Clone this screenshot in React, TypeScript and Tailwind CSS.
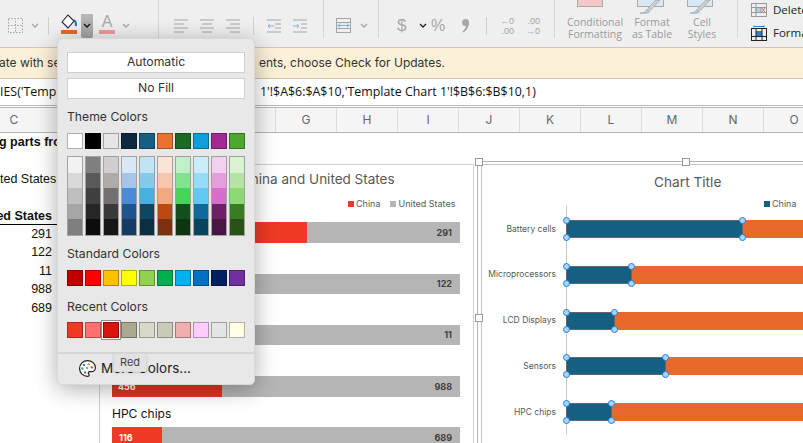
const themeTop = ["#ffffff", "#000000", "#e7e6e6", "#0e2841", "#156082", "#e97132", "#196b24", "#0f9ed5", "#a02b93", "#4ea72e"];
const themeShades = [
  ["#f2f2f2", "#d9d9d9", "#bfbfbf", "#a6a6a6", "#7f7f7f"],
  ["#7f7f7f", "#595959", "#404040", "#262626", "#0d0d0d"],
  ["#d0cece", "#aeabab", "#757070", "#3a3838", "#171616"],
  ["#d9e7f7", "#a5c6ea", "#4a8ad8", "#1f538d", "#153a63"],
  ["#c0e4f5", "#83cbeb", "#45b0e1", "#0f4761", "#0b2f40"],
  ["#fbe3d6", "#f6c6ad", "#f1a983", "#ba4a11", "#7b3010"],
  ["#c1f0c8", "#83e28e", "#47d459", "#124f1a", "#0d3512"],
  ["#caedfb", "#95dcf7", "#60caf3", "#0f6a9c", "#0a435e"],
  ["#f2cfee", "#e59edc", "#d86dcd", "#6f1f66", "#4a1544"],
  ["#d9f2d0", "#b4e5a2", "#8ed973", "#3a7c22", "#275317"],
];
const standard = ["#c00000", "#ff0000", "#ffc000", "#ffff00", "#92d050", "#00b050", "#00b0f0", "#0070c0", "#002060", "#7030a0"];
const recent = ["#ee3a24", "#ff7070", "#d9140f", "#aaa98f", "#d8d8cb", "#cbcab9", "#f0aeae", "#ffccff", "#e5e5e5", "#ffffe5"];

const leftBars = [
  { us: "291", top: 222, h: 21 },
  { us: "122", top: 274, h: 20 },
  { us: "11", top: 325, h: 20 },
  { us: "988", top: 376, h: 21 },
];
const rightBars = [
  { label: "Battery cells", w: 177 },
  { label: "Microprocessors", w: 66 },
  { label: "LCD Displays", w: 49 },
  { label: "Sensors", w: 100 },
  { label: "HPC chips", w: 46 },
];

function Swatch({ color, selected }: { color: string; selected?: boolean }) {
  return (
    <div
      className={`w-4 h-4 border border-black/30 ${selected ? "shadow-[0_0_0_1px_#ffffff,0_0_0_2px_#8f8f8f]" : ""}`}
      style={{ background: color }}
    />
  );
}

function Handle({ pos }: { pos: string }) {
  return <span className={`absolute w-[7px] h-[7px] rounded-full bg-[#a9d4fb] border border-[#1a80e0] ${pos}`} />;
}

function Chevron({ color = "#a5a5a5" }: { color?: string }) {
  return (
    <svg width="8" height="6" viewBox="0 0 8 6" fill="none" stroke={color} strokeWidth="1.3" className="shrink-0">
      <path d="M1 1l3 3 3-3" />
    </svg>
  );
}

function Brush() {
  return (
    <svg width="22" height="14" viewBox="0 0 22 14" className="absolute left-[12px] top-0" fill="#a9cdea" stroke="#9c9c9c" strokeWidth="0.6">
      <path d="M1 13c3 0 6-1 7-4l3 2c-1 2-4 3-10 2z" />
      <path d="M9 8l8-8h4l-9 10z" fill="#cfcfcf" />
    </svg>
  );
}

function Ribbon() {
  return (
    <div className="h-[47px] bg-[#efefef] flex items-stretch shrink-0 text-[#9c9c9c] overflow-hidden">
      <div className="w-[48px] shrink-0 flex items-center gap-[8px] pl-[8px] pt-[4px]">
        <svg width="15" height="15" viewBox="0 0 15 15" fill="none" stroke="#a5a5a5" strokeDasharray="1.5 1.5" className="shrink-0">
          <rect x="0.5" y="0.5" width="14" height="14" />
          <path d="M7.5 0v15M0 7.5h15" />
        </svg>
        <Chevron />
      </div>
      <div className="w-px shrink-0 h-[18px] bg-[#cfcfcf] mt-[17px]" />
      <div className="w-[109px] shrink-0 pl-[12px] pt-[14px] flex">
        <div className="w-[20px] h-[22px] relative">
          <svg width="16" height="16" viewBox="0 0 16 16" fill="none" stroke="#222" strokeWidth="1.1">
            <path d="M1 8l6-7 6 6-6 7z" fill="#fff" />
            <path d="M13 6c2 2 2.5 4 1.5 6" stroke="#1f6fc0" strokeWidth="2" />
          </svg>
          <div className="absolute left-0 top-[16px] w-4 h-[4px] bg-[#e9682b]" />
        </div>
        <div className="w-[12px] h-[24px] bg-gradient-to-b from-[#b8b8b8] to-[#a0a0a0] rounded-b-[2px] flex items-center justify-center">
          <Chevron color="#111" />
        </div>
        <div className="w-[16px] ml-[6px] relative text-center text-[16px] leading-[16px] text-[#a8a8a8]">
          A
          <div className="absolute left-0 top-[16px] w-4 h-[4px] bg-[#f09a9a]" />
        </div>
        <div className="ml-[7px] mt-[9px]"><Chevron /></div>
      </div>
      <div className="w-px shrink-0 h-[38px] bg-[#d6d6d6]" />
      <div className="w-[94px] shrink-0 flex items-center gap-[12px] pl-[15px] pt-[4px]">
        {[0, 1, 2].map((i) => (
          <svg key={i} width="14" height="14" viewBox="0 0 14 14" stroke="#a5a5a5" strokeWidth="1" className="shrink-0">
            <path d={i === 0 ? "M0 1h14M0 5h10M0 9h14M0 13h10" : i === 1 ? "M0 1h14M2 5h10M0 9h14M2 13h10" : "M0 1h14M4 5h10M0 9h14M4 13h10"} />
          </svg>
        ))}
      </div>
      <div className="w-px shrink-0 h-[18px] bg-[#cfcfcf] mt-[17px]" />
      <div className="w-[69px] shrink-0 flex items-center gap-[12px] pl-[13px] pt-[4px]">
        {[0, 1].map((i) => (
          <svg key={i} width="14" height="14" viewBox="0 0 14 14" fill="none" stroke="#a5a5a5" strokeWidth="1" className="shrink-0">
            <path d="M0 1h14M8 5h6M8 9h6M0 13h14" />
            <path d={i ? "M0 7h6M4 5l2 2-2 2" : "M1 7h6M3 5L1 7l2 2"} stroke="#7fb4e4" />
          </svg>
        ))}
      </div>
      <div className="w-px shrink-0 h-[38px] bg-[#d6d6d6]" />
      <div className="w-[54px] shrink-0 flex items-center pl-[12px] pt-[4px] gap-[9px]">
        <svg width="15" height="15" viewBox="0 0 15 15" fill="none" stroke="#a5a5a5" strokeWidth="1" className="shrink-0">
          <rect x="0.5" y="0.5" width="14" height="14" />
          <path d="M0 4.5h15M0 10.5h15" />
          <path d="M2 7.5h11M4 5.5l-2 2 2 2M11 5.5l2 2-2 2" stroke="#6fb0e6" />
        </svg>
        <Chevron />
      </div>
      <div className="w-px shrink-0 h-[38px] bg-[#d6d6d6]" />
      <div className="w-[175px] shrink-0 flex items-center pl-[18px] pt-[4px]">
        <span className="text-[17px] leading-none text-[#a8a8a8] w-[22px] shrink-0">$</span>
        <div className="mr-[4px]"><Chevron color="#222" /></div>
        <span className="text-[16px] leading-none text-[#a8a8a8] w-[30px] shrink-0">%</span>
        <svg width="9" height="14" viewBox="0 0 9 14" className="shrink-0 mr-[12px]" fill="#a8a8a8">
          <circle cx="4.5" cy="3.5" r="3.5" />
          <path d="M8 3.5c0 4-2 8-6 10l-.6-1c2.400-1.500 3.600-4 3.600-7z" />
        </svg>
        <div className="w-[4px] shrink-0" />
        <div className="w-px shrink-0 h-[18px] bg-[#cfcfcf] mr-[12px]" />
        <div className="text-[9px] leading-[10px] text-[#a5a5a5] w-[15px] shrink-0 flex flex-col items-end whitespace-nowrap">
          <span><span className="text-[#7fb4e4]">←</span>0</span>
          <span>.00</span>
        </div>
        <div className="text-[9px] leading-[10px] text-[#a5a5a5] w-[15px] shrink-0 ml-[11px] flex flex-col items-end whitespace-nowrap">
          <span>.00</span>
          <span><span className="text-[#7fb4e4]">→</span>0</span>
        </div>
      </div>
      <div className="w-px shrink-0 h-[38px] bg-[#d6d6d6]" />
      <div className="w-[182px] shrink-0 flex text-[10.5px] leading-[12px] text-center font-['Open_Sans',sans-serif] text-[#9a9a9a] pt-[16px] pl-[10px]">
        <div className="w-[60px] shrink-0 relative whitespace-nowrap flex flex-col items-center">
          <span>Conditional</span><span>Formatting</span>
          <div className="absolute left-[12px] -top-[16px] w-[26px] h-[7px] bg-[#f5c8c8] border border-[#aaa] border-t-0" />
        </div>
        <div className="w-[50px] ml-[2px] shrink-0 relative whitespace-nowrap flex flex-col items-center">
          <span>Format</span><span>as Table</span>
          <div className="absolute left-[10px] -top-[16px] w-[27px] h-[7px] bg-[#d8e8f6] border border-[#aaa] border-t-0" />
          <div className="absolute left-0 -top-[16px]"><Brush /></div>
        </div>
        <div className="w-[50px] shrink-0 relative whitespace-nowrap flex flex-col items-center">
          <span>Cell</span><span>Styles</span>
          <div className="absolute left-[10px] -top-[16px] w-[26px] h-[7px] bg-[#d8e8f6] border border-[#aaa] border-t-0" />
          <div className="absolute left-0 -top-[16px]"><Brush /></div>
        </div>
      </div>
      <div className="w-px shrink-0 h-[38px] bg-[#d6d6d6]" />
      <div className="flex flex-col pl-[13px] text-[11.5px] leading-[14px] text-[#222] font-['Open_Sans',sans-serif] pt-[3px] gap-[8px] whitespace-nowrap">
        <div className="flex items-center gap-[6px]">
          <svg width="16" height="14" viewBox="0 0 16 14" fill="none" stroke="#999" className="shrink-0">
            <rect x="0.5" y="0.5" width="15" height="13" />
            <path d="M5 0v14M0 4.500h16M0 9.500h16" />
            <rect x="5" y="4.500" width="5" height="5" fill="#a9cdea" />
            <path d="M11 5l3 4M14 5l-3 4" stroke="#e57373" />
          </svg>
          Delete
        </div>
        <div className="flex items-center gap-[6px]">
          <svg width="16" height="16" viewBox="0 0 16 16" fill="none" stroke="#222" className="shrink-0">
            <path d="M3 .5v2M13 .5v2M3 1.500h10" stroke="#2f7fd0" />
            <rect x="0.5" y="3.500" width="15" height="12" />
            <rect x="5" y="6" width="6" height="5" fill="#2f7fd0" stroke="none" />
            <path d="M0 11.500h16M5 3v13M11 3v13" />
          </svg>
          Format
        </div>
      </div>
    </div>
  );
}

function LeftChart() {
  return (
    <div className="absolute left-[99px] top-[31px] w-[375px] h-[300px] border-l border-t border-r border-[#d0d0d0] bg-white font-['Inter','Liberation_Sans',sans-serif]">
      <div className="absolute left-[141px] top-[5px] text-[13.5px] leading-[18px] text-[#595959] whitespace-nowrap">China and United States</div>
      <div className="absolute left-[248px] top-[34px] flex items-center text-[9px] leading-[10px] text-[#595959] gap-[2px] whitespace-nowrap">
        <span className="w-[6px] h-[6px] bg-[#ee3a24]" />China
        <span className="w-[6px] h-[6px] bg-[#b5b5b5] ml-[8px]" />United States
      </div>
      {leftBars.map((b) => (
        <div key={b.us} className="absolute left-[12px] w-[348px] bg-[#b5b5b5] flex items-center justify-end pr-[8px] text-[9px] font-bold text-[#404040]" style={{ top: b.top - 165, height: b.h }}>
          {b.us}
        </div>
      ))}
      <div className="absolute left-[12px] top-[57px] w-[195px] h-[21px] bg-[#ee3a24]" />
      <div className="absolute left-[12px] top-[211px] w-[110px] h-[21px] bg-[#dd3522] flex items-center pl-[6px] text-[9px] font-bold text-white">456</div>
      <div className="absolute left-[12px] top-[241px] text-[12px] leading-[16px] text-[#111]">HPC chips</div>
      <div className="absolute left-[12px] top-[262px] w-[348px] h-[21px] bg-[#b5b5b5] flex justify-end items-center pr-[8px] text-[9px] font-bold text-[#404040]">
        689
        <div className="absolute left-0 top-0 w-[50px] h-full bg-[#ee3a24] text-white flex items-center pl-[7px]">116</div>
      </div>
    </div>
  );
}

function RightChart() {
  return (
    <div className="absolute left-[477px] top-[28px] w-[340px] h-[300px] border-l border-t border-[#b0b0b0] bg-white font-['Inter','Liberation_Sans',sans-serif]">
      <div className="absolute left-[3px] top-[2px] w-[340px] h-[300px] border-l border-t border-[#c4c4c4] bg-white">
        <span className="absolute -left-[7px] -top-[7px] w-[8px] h-[8px] bg-white border border-[#999]" />
        <span className="absolute left-[200px] -top-[7px] w-[8px] h-[8px] bg-white border border-[#999]" />
        <span className="absolute -left-[7px] top-[149px] w-[8px] h-[8px] bg-white border border-[#999]" />
        <div className="absolute left-[172px] top-[8px] text-[13.7px] leading-[18px] text-[#595959]">Chart Title</div>
        <div className="absolute left-[282px] top-[34px] flex items-center text-[9px] leading-[10px] text-[#595959] gap-[2px]">
          <span className="w-[6px] h-[6px] bg-[#156082]" />China
        </div>
        <div className="absolute left-[84px] top-[41px] w-px h-[229px] bg-[#c9c9c9]" />
        <div className="absolute left-0 top-[55px] w-full flex flex-col gap-[27.75px]">
          {rightBars.map((b) => (
            <div key={b.label} className="flex items-center h-[18px]">
              <div className="w-[74px] shrink-0 text-right text-[8.5px] text-[#595959] whitespace-nowrap">{b.label}</div>
              <div className="ml-[10px] flex-1 h-[18px] bg-[#e9682b] relative">
                <div className="relative h-full bg-[#156082] border border-[#666]" style={{ width: b.w }}>
                  <Handle pos="-left-[4px] -top-[4px]" />
                  <Handle pos="-right-[4px] -top-[4px]" />
                  <Handle pos="-left-[4px] -bottom-[4px]" />
                  <Handle pos="-right-[4px] -bottom-[4px]" />
                </div>
              </div>
            </div>
          ))}
        </div>
      </div>
    </div>
  );
}

function PaletteIcon() {
  return (
    <svg width="19" height="19" viewBox="0 0 24 24" fill="#fff" stroke="#222" strokeWidth="1.500" className="shrink-0">
      <path d="M12 22a1 1 0 0 1 0-20 10 9 0 0 1 10 9 5 5 0 0 1-5 5h-2.250a1.750 1.750 0 0 0-1.400 2.800l.3.4a1.750 1.750 0 0 1-1.400 2.800z" />
      <circle cx="13.500" cy="6.500" r="1.500" fill="#f0a030" stroke="none" />
      <circle cx="17.500" cy="10.500" r="1.500" fill="#e0503c" stroke="none" />
      <circle cx="7.500" cy="7.500" r="1.500" fill="#2f80d0" stroke="none" />
      <circle cx="5.500" cy="12" r="1.500" fill="#40b060" stroke="none" />
      <circle cx="11.500" cy="11.500" r="1.300" fill="#40b060" stroke="none" />
      <circle cx="9" cy="17" r="1.500" fill="#8a4fb0" stroke="none" />
    </svg>
  );
}

function ColorMenu() {
  return (
    <div className="absolute left-[57px] top-[38px] w-[198px] h-[347px] bg-[#e8e8e8] rounded-[5px] border border-[#d8d8d8] shadow-[0_4px_22px_rgba(0,0,0,0.32)] font-['Inter','Liberation_Sans',sans-serif] text-[#333] text-[12.200px] z-10">
      <div className="flex flex-col px-[9px] pt-[13px]">
        <div className="h-[21px] bg-white border border-[#d0d0d0] flex items-center justify-center">Automatic</div>
        <div className="h-[21px] bg-white border border-[#d0d0d0] flex items-center justify-center mt-[5px]">No Fill</div>
        <div className="mt-[10px] leading-[15px]">Theme Colors</div>
        <div className="flex justify-between mt-[9px]">
          {themeTop.map((c) => <Swatch key={c} color={c} />)}
        </div>
        <div className="flex justify-between mt-[7px]">
          {themeShades.map((col, i) => (
            <div key={i} className="w-4 border border-black/30">
              {col.map((c) => <div key={c} className="h-[15.600px]" style={{ background: c }} />)}
            </div>
          ))}
        </div>
        <div className="mt-[10px] leading-[15px]">Standard Colors</div>
        <div className="flex justify-between mt-[9px]">
          {standard.map((c) => <Swatch key={c} color={c} />)}
        </div>
        <div className="mt-[13px] leading-[15px]">Recent Colors</div>
        <div className="flex justify-between mt-[8px]">
          {recent.map((c, i) => <Swatch key={c} color={c} selected={i === 2} />)}
        </div>
      </div>
      <div className="h-[2px] bg-[#d6d6d6] mt-[14px]" />
      <div className="flex items-center pl-[20px] pt-[5px] gap-[4px] text-[13.5px] leading-[19px] text-[#222]">
        <PaletteIcon />
        More Colors...
      </div>
      <div className="absolute left-[55px] top-[314px] h-[19px] px-[6px] bg-[#e2e2e2] rounded-[2px] border border-[#d8d8d8] shadow-sm flex items-center text-[11px] text-[#444]">Red</div>
    </div>
  );
}

export default function App() {
  return (
    <div className="w-[803px] h-[443px] overflow-hidden relative bg-white flex flex-col font-['Liberation_Sans',sans-serif]">
      <Ribbon />
      <div className="h-[32px] bg-[#fcf0d8] border-t border-b border-[#cfc6b2] flex items-center text-[12px] text-[#333] font-['Inter',sans-serif] whitespace-nowrap shrink-0">
        <span className="w-[260px] shrink-0 -ml-[1px]">ate with se</span>
        <span>ents, choose Check for Updates.</span>
      </div>
      <div className="h-[27px] bg-white border-b border-[#b8b8b8] flex items-center text-[12.400px] text-[#111] font-['Open_Sans',sans-serif] whitespace-nowrap shrink-0">
        <span className="w-[260px] shrink-0">IES('Temp</span>
        <span>1'!$A$6:$A$10,'Template Chart 1'!$B$6:$B$10,1)</span>
      </div>
      <div className="h-[26px] mt-px bg-[#f5f5f5] border-t border-b border-t-[#b8b8b8] border-b-[#b5b5b5] flex text-[12px] text-[#666] shrink-0 font-['Inter',sans-serif]">
        <div className="w-[57px] shrink-0 flex justify-center items-center pr-[29px]">C</div>
        <div className="w-[218px] shrink-0" />
        {["G", "H", "I", "J", "K", "L", "M", "N", "O"].map((h) => (
          <div key={h} className="w-[61px] shrink-0 flex justify-center items-center border-l border-[#dcdcdc]">{h}</div>
        ))}
      </div>
      <div className="flex-1 relative bg-white">
        <div className="absolute left-0 top-0 w-[57px] h-full text-[12.500px] text-[#111] overflow-hidden whitespace-nowrap">
          <div className="mt-px font-bold leading-[16px] -ml-[1px]">g parts from</div>
          <div className="mt-[21px] leading-[16px] text-right pr-[2px]">ted States</div>
          <div className="mt-[21px] font-bold flex justify-end pr-[5px] border-b border-black leading-[16px]">ed States</div>
          {["291", "122", "11", "988", "689"].map((n) => (
            <div key={n} className="text-right pr-[5px] leading-[18.400px]">{n}</div>
          ))}
        </div>
        <LeftChart />
        <RightChart />
      </div>
      <ColorMenu />
    </div>
  );
}
